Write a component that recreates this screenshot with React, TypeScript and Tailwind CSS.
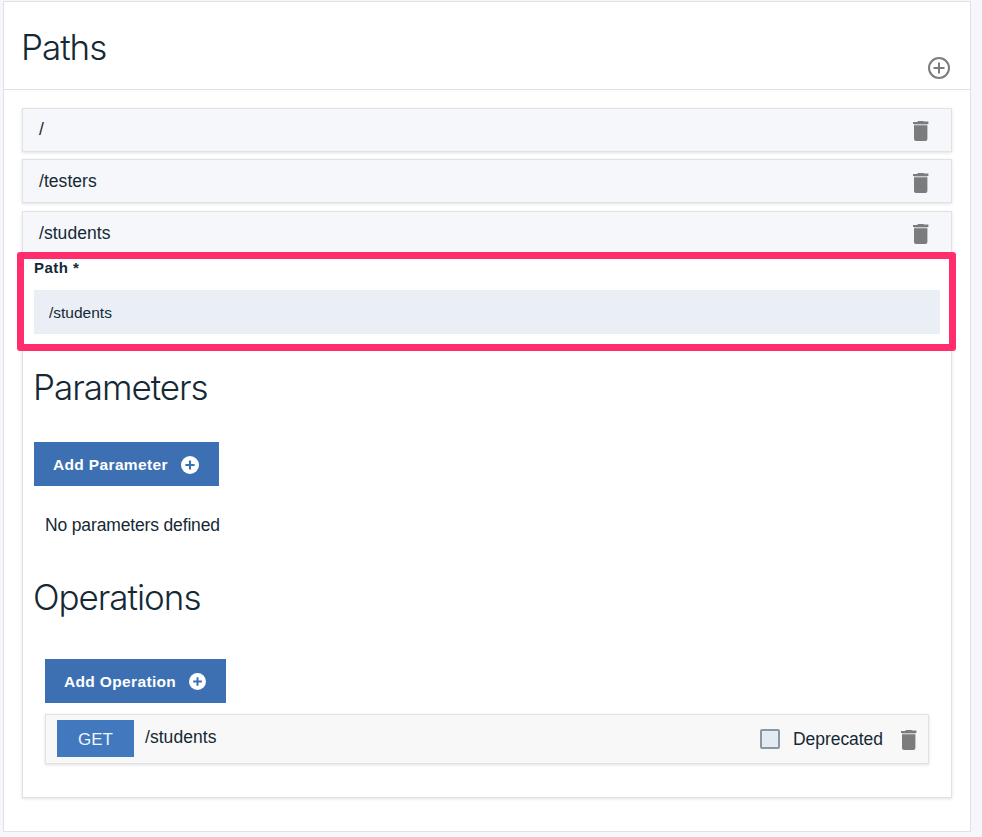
import React from "react";

const sans = "font-['Liberation_Sans',Arial,sans-serif]";
const heading =
  "font-['Inter',sans-serif] font-light text-[35px] leading-[46px] tracking-[-1.03px] -ml-px";

function TrashIcon({ className = "" }: { className?: string }) {
  return (
    <svg width="16" height="20" viewBox="0 0 16 20" className={`shrink-0 ${className}`} fill="#7b7c7d">
      <path d="M4.5 0.6 5.2 0h5.2l.7.6h4.3V3H0V.9h4.2z" />
      <path d="M1 3h13.4v1.2H1z" fill="#c9cbce" />
      <path d="M1 4.2h13.4V18a2 2 0 0 1-2 2H3a2 2 0 0 1-2-2z" />
    </svg>
  );
}

function PlusBadge({ size }: { size: number }) {
  return (
    <svg width={size} height={size} viewBox="0 0 18 18" className="mt-px shrink-0">
      <circle cx="9" cy="9" r="9" fill="#fff" />
      <path d="M9 4.4v9.2M4.4 9h9.2" stroke="#3d70b2" strokeWidth="2.1" />
    </svg>
  );
}

function PathRow({ path, textClass, iconClass }: { path: string; textClass: string; iconClass: string }) {
  return (
    <div className="flex h-11 items-start justify-between border border-[#e0e2e4] bg-[#f5f7fb] pl-4 pr-[22.5px] shadow-[0_1px_3px_rgba(0,0,0,0.12)]">
      <span className={`text-[17.5px] leading-5 tracking-[0.05px] ${textClass}`}>{path}</span>
      <TrashIcon className={iconClass} />
    </div>
  );
}

function AddButton({ label, className, iconSize }: { label: string; className: string; iconSize: number }) {
  return (
    <button className={`flex h-11 items-center justify-between bg-[#3d70b2] pl-[19px] text-[15.5px] font-bold tracking-[0.35px] text-white ${className}`}>
      <span className="mt-px whitespace-nowrap">{label}</span>
      <PlusBadge size={iconSize} />
    </button>
  );
}

export default function App() {
  return (
    <div className={`h-[837px] w-[982px] overflow-hidden bg-[#f5f7fa] pl-[3px] pt-px text-[#152935] ${sans}`}>
      <main className="h-[831px] w-[968px] border border-[#dfe3e8] bg-white">
        <header className="flex h-[88px] items-start justify-between border-b border-[#dfe3e8] pl-[18px] pr-[19px]">
          <h1 className={`mt-[22px] ${heading}`}>Paths</h1>
          <svg width="24" height="24" viewBox="0 0 24 24" className="mt-[54px]" fill="none" stroke="#7b7c7d" strokeWidth="2">
            <circle cx="12" cy="12" r="10" />
            <path d="M12 6.5v11M6.5 12h11" />
          </svg>
        </header>

        <div className="flex flex-col px-[18px] pt-[18px]">
          <PathRow path="/" textClass="mt-[10px]" iconClass="mt-3" />
          <div className="mt-[7px]">
            <PathRow path="/testers" textClass="mt-[11px]" iconClass="mt-[13px]" />
          </div>

          <section className="mt-2 h-[587px] border border-[#e0e2e4] bg-white shadow-[0_1px_3px_rgba(0,0,0,0.12)]">
            <div className="flex h-[42px] items-start justify-between bg-[#f5f7fb] pl-4 pr-[22.5px]">
              <span className="mt-[11px] text-[17.5px] leading-5 tracking-[0.05px]">/students</span>
              <TrashIcon className="mt-3" />
            </div>

            <div className="relative -ml-1.5 -mt-0.5 h-[99px] w-[938.5px] rounded-[3px] border-7 border-[#ff2d6b] bg-white pl-2.5">
              <label className="block h-[18px] pt-px text-[15px] font-bold leading-4 tracking-[0.45px]">Path *</label>
              <div className="mt-[13px] flex h-11 w-[906px] items-center bg-[#eaeff6] pl-[15px] pt-0.5 text-[15.5px]">/students</div>
            </div>

            <div className="pl-[11px] pr-[22px]">
              <h2 className={`mt-[13px] ${heading}`}>Parameters</h2>
              <AddButton label="Add Parameter" iconSize={18} className="mt-8 w-[185px] pr-5" />
              <p className="ml-[11px] mt-7 text-[17.5px] leading-[22px] tracking-[-0.15px]">No parameters defined</p>

              <h2 className={`mt-[38px] ${heading}`}>Operations</h2>
              <div className="ml-[11px] mt-[39px]">
                <AddButton label="Add Operation" iconSize={17} className="w-[181px] pr-5" />
                <div className="mt-[11px] flex h-[50px] w-[884px] items-center border border-[#e0e2e4] bg-[#f8f8f8] pl-[11px] pr-[11.5px] shadow-[0_1px_3px_rgba(0,0,0,0.12)]">
                  <div className="-mt-px flex h-[37px] w-[77px] items-center justify-center bg-[#4178be] pt-0.5 text-[17px] text-[#f0f5fb]">GET</div>
                  <span className="-mt-1 ml-[11px] text-[17.5px] leading-5 tracking-[0.05px]">/students</span>
                  <div className="ml-auto flex items-center">
                    <span className="size-5 rounded-[2px] border-2 border-[#8897a2] bg-[#e4eaf2]" />
                    <span className="ml-[13px] w-[90px] whitespace-nowrap text-[17.5px] leading-5 tracking-[-0.05px]">Deprecated</span>
                    <TrashIcon className="ml-[17.5px] mt-px" />
                  </div>
                </div>
              </div>
            </div>
          </section>
        </div>
      </main>
    </div>
  );
}
